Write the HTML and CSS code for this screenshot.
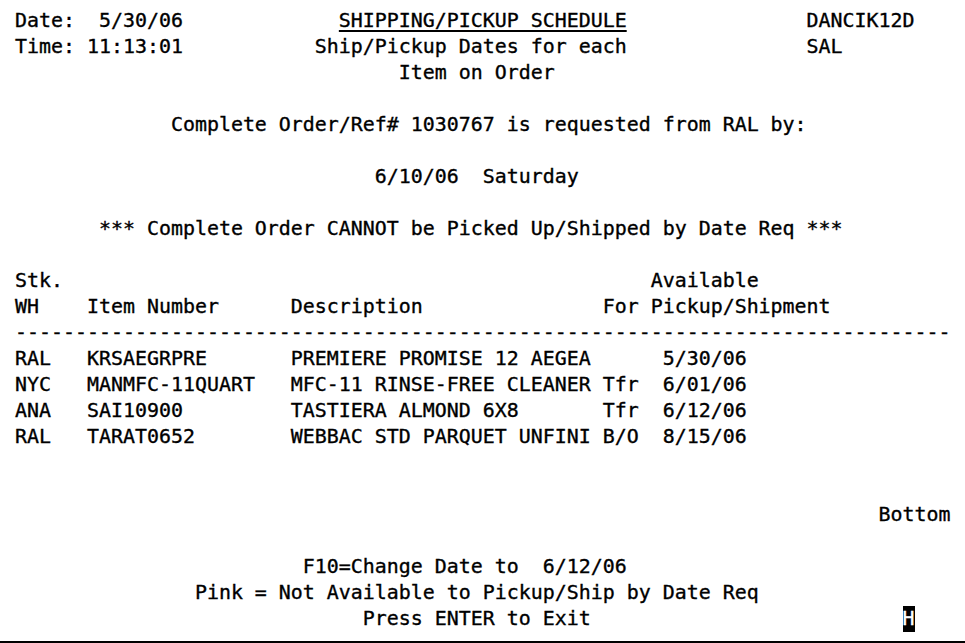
FILE: index.html
```html
<!DOCTYPE html>
<html>
<head>
<meta charset="utf-8">
<link rel="stylesheet" href="styles.css">
<title>Shipping/Pickup Schedule</title>
</head>
<body>
<div class="screen">
<div class="row"> Date:  5/30/06             <span class="ul">SHIPPING/PICKUP SCHEDULE</span>               DANCIK12D</div>
<div class="row"> Time: 11:13:01           Ship/Pickup Dates for each               SAL</div>
<div class="row">                                 Item on Order</div>
<div class="row"></div>
<div class="row">              Complete Order/Ref# 1030767 is requested from RAL by:</div>
<div class="row"></div>
<div class="row">                               6/10/06  Saturday</div>
<div class="row"></div>
<div class="row">        *** Complete Order CANNOT be Picked Up/Shipped by Date Req ***</div>
<div class="row"></div>
<div class="row"> Stk.                                                 Available</div>
<div class="row"> WH    Item Number      Description               For Pickup/Shipment</div>
<div class="row"> ------------------------------------------------------------------------------</div>
<div class="row"> RAL   KRSAEGRPRE       PREMIERE PROMISE 12 AEGEA      5/30/06</div>
<div class="row"> NYC   MANMFC-11QUART   MFC-11 RINSE-FREE CLEANER Tfr  6/01/06</div>
<div class="row"> ANA   SAI10900         TASTIERA ALMOND 6X8       Tfr  6/12/06</div>
<div class="row"> RAL   TARAT0652        WEBBAC STD PARQUET UNFINI B/O  8/15/06</div>
<div class="row"></div>
<div class="row"></div>
<div class="row">                                                                         Bottom</div>
<div class="row"></div>
<div class="row">                         F10=Change Date to  6/12/06</div>
<div class="row">                Pink = Not Available to Pickup/Ship by Date Req</div>
<div class="row">                              Press ENTER to Exit                          <span class="cursor">H</span></div>
</div>
<div class="baseline"></div>
</body>
</html>
```
FILE: styles.css
```css
html, body {
  margin: 0;
  padding: 0;
  background: #ffffff;
}
.screen {
  padding: 8px 0 0 3px;
  font-family: "DejaVu Sans Mono", "Liberation Mono", monospace;
  font-size: 19.93px;
  color: #000000;
  -webkit-text-stroke: 0.35px #000000;
}
.row {
  height: 26px;
  line-height: 26px;
  white-space: pre;
}
.ul {
  text-decoration: underline;
  text-decoration-thickness: 2px;
  text-underline-offset: 3px;
}
.cursor {
  display: inline-block;
  width: 12px;
  height: 26px;
  background: #000000;
  color: #ffffff;
  -webkit-text-stroke: 0.35px #ffffff;
  vertical-align: top;
}
.baseline {
  margin-top: 9px;
  height: 2px;
  background: #000000;
}
```
